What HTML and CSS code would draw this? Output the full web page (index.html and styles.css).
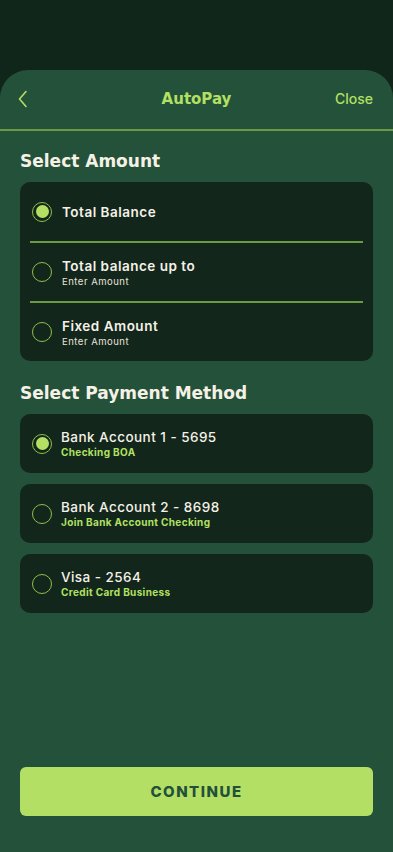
FILE: index.html
```html
<!DOCTYPE html>
<html>
<head>
<meta charset="utf-8">
<link rel="stylesheet" href="styles.css">
</head>
<body>
<div class="top"></div>
<div class="sheet">
  <header class="header">
    <svg class="back" width="12" height="18" viewBox="0 0 12 18"><path d="M9 1.5 L2.5 9 L9 16.5" fill="none" stroke="#b3e064" stroke-width="1.6" stroke-linecap="round" stroke-linejoin="round"/></svg>
    <div class="title">AutoPay</div>
    <div class="close">Close</div>
  </header>
  <main class="content">
    <h2 class="section">Select Amount</h2>
    <div class="card">
      <div class="row">
        <span class="radio on"></span>
        <div class="label"><div class="name">Total Balance</div></div>
      </div>
      <div class="divider"></div>
      <div class="row">
        <span class="radio"></span>
        <div class="label"><div class="name">Total balance up to</div><div class="hint">Enter Amount</div></div>
      </div>
      <div class="divider"></div>
      <div class="row">
        <span class="radio"></span>
        <div class="label"><div class="name">Fixed Amount</div><div class="hint">Enter Amount</div></div>
      </div>
    </div>
    <h2 class="section sec2">Select Payment Method</h2>
    <div class="methods">
      <div class="card method">
        <span class="radio on"></span>
        <div class="label"><div class="mname">Bank Account 1 - 5695</div><div class="msub">Checking BOA</div></div>
      </div>
      <div class="card method">
        <span class="radio"></span>
        <div class="label"><div class="mname">Bank Account 2 - 8698</div><div class="msub">Join Bank Account Checking</div></div>
      </div>
      <div class="card method">
        <span class="radio"></span>
        <div class="label"><div class="mname">Visa - 2564</div><div class="msub">Credit Card Business</div></div>
      </div>
    </div>
  </main>
  <div class="footer">
    <button class="continue">CONTINUE</button>
  </div>
</div>
</body>
</html>
```
FILE: styles.css
```css
* { box-sizing: border-box; }
html, body { margin: 0; padding: 0; }
body {
  background: #11261a;
  font-family: Inter, "Noto Sans", sans-serif;
  width: 393px;
  height: 852px;
  overflow: hidden;
}
.top { height: 70px; }
.sheet {
  background: #245139;
  border-radius: 28px 28px 0 0;
  height: 782px;
  display: flex;
  flex-direction: column;
}
.header {
  height: 61px;
  border-bottom: 2px solid #6a9a42;
  display: flex;
  align-items: center;
  justify-content: space-between;
  padding: 0 20px 0 17px;
  position: relative;
}
.back { display: block; margin-top: -2px; }
.title {
  position: absolute;
  left: 0; right: 0;
  text-align: center;
  color: #b3e064;
  font-family: "DejaVu Sans", sans-serif;
  font-weight: 700;
  font-size: 15px;
  top: 20px;
  pointer-events: none;
}
.close {
  color: #b3e064;
  font-size: 14px;
  font-weight: 500;
  margin-top: -3px;
}
.content { padding: 0 20px; }
.section {
  margin: 0;
  color: #f6f1e7;
  font-family: "DejaVu Sans", sans-serif;
  font-size: 17px;
  font-weight: 700;
  height: 51px;
  display: flex;
  align-items: center;
  padding-top: 8px;
}
.sec2 { height: 53px; padding-top: 11px; }
.card {
  background: #12261b;
  border-radius: 10px;
}
.row {
  height: 59px;
  display: flex;
  align-items: center;
  padding-left: 12px;
}
.row:nth-child(3), .row:nth-child(5) { height: 58px; }
.divider {
  height: 2px;
  background: #6a9a42;
  margin: 0 10px;
}
.radio {
  width: 20px;
  height: 20px;
  border-radius: 50%;
  border: 1.5px solid #8fc04a;
  flex: none;
  margin-right: 10px;
  display: flex;
  align-items: center;
  justify-content: center;
}
.radio.on::after {
  content: "";
  width: 13px;
  height: 13px;
  border-radius: 50%;
  background: #b3e064;
}
.name {
  color: #f6f1e7;
  font-size: 13.5px;
  font-weight: 600;
  letter-spacing: 0.5px;
}
.hint {
  color: #e8e4da;
  font-size: 9.5px;
  letter-spacing: 0.5px;
  margin-top: 2px;
}
.methods { display: flex; flex-direction: column; gap: 11px; }
.method {
  height: 59px;
  display: flex;
  align-items: center;
  padding-left: 12px;
}
.method .radio { margin-right: 9px; }
.mname {
  color: #f6f1e7;
  font-size: 13.5px;
  font-weight: 500;
  letter-spacing: 0.45px;
}
.msub {
  color: #b3e064;
  font-size: 10px;
  font-weight: 700;
  letter-spacing: 0.35px;
  margin-top: 1px;
}
.footer {
  margin-top: auto;
  padding: 0 20px 36px;
}
.continue {
  width: 100%;
  height: 49px;
  border: none;
  border-radius: 6px;
  background: #b3e064;
  color: #23503a;
  font-family: Inter, "Noto Sans", sans-serif;
  font-weight: 800;
  font-size: 15px;
  letter-spacing: 1.5px;
}
```
